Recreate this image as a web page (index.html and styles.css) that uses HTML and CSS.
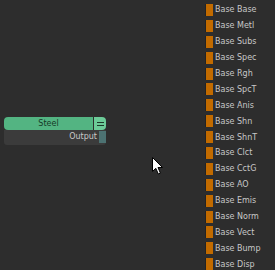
FILE: index.html
```html
<!DOCTYPE html>
<html lang="en">
<head>
  <meta charset="UTF-8">
  <title>Node Editor</title>
  <link rel="stylesheet" href="styles.css">
</head>
<body>
  <div class="editor">
    <div class="canvas">
      <div class="node">
        <div class="node-head">
          <div class="node-title">Steel</div>
          <div class="node-btn"><span></span><span></span></div>
        </div>
        <div class="node-body">
          <span class="out-label">Output</span>
          <span class="out-socket"></span>
        </div>
      </div>
    </div>

    <ul class="inputs">
      <li><span class="sock"></span>Base Base</li>
      <li><span class="sock"></span>Base Metl</li>
      <li><span class="sock"></span>Base Subs</li>
      <li><span class="sock"></span>Base Spec</li>
      <li><span class="sock"></span>Base Rgh</li>
      <li><span class="sock"></span>Base SpcT</li>
      <li><span class="sock"></span>Base Anis</li>
      <li><span class="sock"></span>Base Shn</li>
      <li><span class="sock"></span>Base ShnT</li>
      <li><span class="sock"></span>Base Clct</li>
      <li><span class="sock"></span>Base CctG</li>
      <li><span class="sock"></span>Base AO</li>
      <li><span class="sock"></span>Base Emis</li>
      <li><span class="sock"></span>Base Norm</li>
      <li><span class="sock"></span>Base Vect</li>
      <li><span class="sock"></span>Base Bump</li>
      <li><span class="sock"></span>Base Disp</li>
    </ul>
  </div>

  <svg class="cursor" width="12" height="18" viewBox="0 0 12 18">
    <path d="M0.5 0.5 L0.5 14.5 L3.8 11.3 L6.3 17 L8.4 16.1 L6 10.5 L10.5 10.5 Z" fill="#fff" stroke="#000" stroke-width="1"/>
  </svg>
</body>
</html>
```

FILE: styles.css
```css
body {
  margin: 0;
  width: 275px;
  height: 270px;
  overflow: hidden;
  background: #2d2d2d;
  font-family: "DejaVu Sans", sans-serif;
  font-size: 8px;
  position: relative;
}

.editor {
  display: flex;
  height: 270px;
}

.canvas {
  width: 206px;
  padding: 117px 0 0 4px;
  box-sizing: border-box;
}

.node {
  width: 102px;
}

.node-head {
  display: flex;
  height: 13px;
}

.node-title {
  flex: 1;
  background: #53b482;
  border-radius: 4px 0 0 4px;
  color: #163a26;
  text-align: center;
  line-height: 13px;
}

.node-btn {
  width: 12px;
  margin-left: 1px;
  background: #6ccb98;
  border-radius: 0 4px 4px 0;
  display: flex;
  flex-direction: column;
  justify-content: center;
  align-items: center;
  gap: 2px;
}

.node-btn span {
  width: 7px;
  height: 1px;
  background: #1d3a2a;
}

.node-body {
  height: 15px;
  background: #3b3b3b;
  border-radius: 0 0 3px 3px;
  display: flex;
  justify-content: flex-end;
  align-items: stretch;
}

.out-label {
  color: #c9c9c9;
  line-height: 13px;
  margin-right: 2px;
}

.out-socket {
  width: 7px;
  margin: 1px 0 2px 0;
  background: #4c7272;
}

.inputs {
  list-style: none;
  margin: 0;
  padding: 2px 0 0 0;
}

.inputs li {
  display: flex;
  align-items: center;
  height: 15.9px;
  color: #c8c8c8;
  white-space: nowrap;
}

.sock {
  width: 7px;
  height: 12px;
  margin: 0 2px 0 0;
  background: #c26b00;
  border-left: 1px solid #232323;
  margin-left: -1px;
}

.cursor {
  position: absolute;
  left: 152px;
  top: 157px;
}
```
